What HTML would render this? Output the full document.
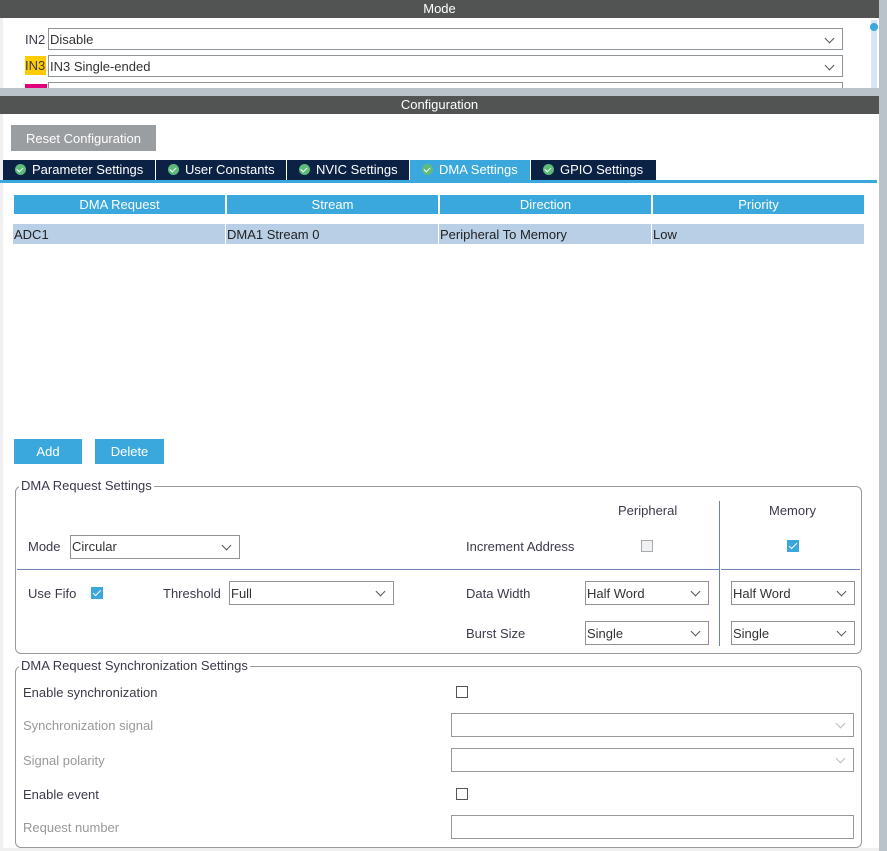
<!DOCTYPE html>
<html><head><meta charset="utf-8"><style>
*{margin:0;padding:0;box-sizing:border-box}
body{width:887px;height:851px;overflow:hidden;background:#fff;font-family:"Liberation Sans",Arial,sans-serif;font-size:13px;color:#3a3a4a;position:relative}
.a{position:absolute}
.hdr{background:#525453;color:#fff;text-align:center;font-size:13px;line-height:18px;left:0;width:879px;height:18px}
.sel{position:absolute;border:1px solid #8e9498;background:#fff;height:24px;line-height:22px;padding-left:1px;color:#333}
.sel:after{content:"";position:absolute;right:9px;top:6px;width:6px;height:6px;border-right:1px solid #555;border-bottom:1px solid #555;transform:rotate(45deg)}
.sel.dis:after{border-color:#bbb}
.tab{position:absolute;top:160px;height:20px;background:#0c2244;color:#fff;line-height:20px;padding-left:12px;font-size:13px}
.tab i{display:inline-block;width:11px;height:11px;border-radius:50%;background:#5dbb7a;vertical-align:-1px;margin-right:6px;position:relative}
.tab i:after{content:"";position:absolute;left:3px;top:2px;width:3px;height:5px;border-right:1.5px solid #fff;border-bottom:1.5px solid #fff;transform:rotate(45deg)}
.th{position:absolute;top:195px;height:19px;background:#3aa8dc;color:#fff;text-align:center;line-height:20px}
.btn{position:absolute;background:#3aa8dc;color:#fff;text-align:center;line-height:26px;height:25px}
.fs{position:absolute;border:1px solid #9a9a9a;border-radius:6px}
.lg{position:absolute;background:#fff;padding:0 2px;line-height:14px}
.cb{position:absolute;width:12px;height:12px;border:1px solid #555;background:#fff}
.cbc{position:absolute;width:12px;height:12px;background:#3aa8dc}
.cbc:after{content:"";position:absolute;left:4px;top:1px;width:3px;height:7px;border-right:1.5px solid #fff;border-bottom:1.5px solid #fff;transform:rotate(45deg)}
.gray{color:#999}
</style></head><body>
<div class="a" style="left:0;top:0;width:3px;height:851px;background:#f0f0f0"></div>
<div class="a" style="left:0;top:848px;width:887px;height:3px;background:#f0f0f0"></div>
<div class="a" style="left:879px;top:0;width:8px;height:851px;background:#b9c3c9"></div>
<div class="a hdr" style="top:0">Mode</div>
<div class="a" style="left:871px;top:20px;width:6px;height:68px;background:#d8e6f3"></div>
<div class="a" style="left:870px;top:23px;width:8px;height:8px;border-radius:50%;background:#3aa8dc"></div>
<div class="a" style="left:25px;top:32px">IN2</div>
<div class="sel" style="left:48px;top:28px;width:795px;height:22px;line-height:21px">Disable</div>
<div class="a" style="left:25px;top:56px;height:19px;width:21px;background:#ffcc00;line-height:20px">IN3</div>
<div class="sel" style="left:48px;top:55px;width:795px;height:22px;line-height:21px">IN3 Single-ended</div>
<div class="a" style="left:25px;top:84px;width:22px;height:4px;background:#e0007a"></div>
<div class="a" style="left:48px;top:82px;width:795px;height:6px;border:1px solid #8e9498;border-bottom:0"></div>
<div class="a" style="left:0;top:88px;width:879px;height:8px;background:#b9c3c9"></div>
<div class="a hdr" style="top:96px">Configuration</div>
<div class="a" style="left:11px;top:125px;width:145px;height:26px;background:#9a9ea1;color:#fff;text-align:center;line-height:27px">Reset Configuration</div>
<div class="tab" style="left:3px;width:152px"><i></i>Parameter Settings</div>
<div class="tab" style="left:156px;width:130px"><i></i>User Constants</div>
<div class="tab" style="left:287px;width:122px"><i></i>NVIC Settings</div>
<div class="tab" style="left:410px;width:120px;background:#3aa8dc"><i></i>DMA Settings</div>
<div class="tab" style="left:531px;width:125px"><i></i>GPIO Settings</div>
<div class="a" style="left:0;top:180px;width:877px;height:3px;background:#3aa8dc"></div>
<div class="th" style="left:14px;width:211px">DMA Request</div>
<div class="th" style="left:227px;width:211px">Stream</div>
<div class="th" style="left:440px;width:211px">Direction</div>
<div class="th" style="left:653px;width:211px">Priority</div>
<div class="a" style="left:13px;top:224px;width:851px;height:20px;background:#b8cfe6"></div>
<div class="a" style="left:225px;top:224px;width:1px;height:20px;background:#fff"></div>
<div class="a" style="left:438px;top:224px;width:1px;height:20px;background:#fff"></div>
<div class="a" style="left:651px;top:224px;width:1px;height:20px;background:#fff"></div>
<div class="a" style="left:14px;top:227px;color:#222">ADC1</div>
<div class="a" style="left:227px;top:227px;color:#222">DMA1 Stream 0</div>
<div class="a" style="left:440px;top:227px;color:#222">Peripheral To Memory</div>
<div class="a" style="left:653px;top:227px;color:#222">Low</div>
<div class="btn" style="left:14px;top:439px;width:68px">Add</div>
<div class="btn" style="left:95px;top:439px;width:69px">Delete</div>

<div class="fs" style="left:15px;top:486px;width:847px;height:168px"></div>
<div class="lg" style="left:19px;top:479px">DMA Request Settings</div>
<div class="a" style="left:618px;top:503px">Peripheral</div>
<div class="a" style="left:769px;top:503px">Memory</div>
<div class="a" style="left:719px;top:501px;width:1px;height:145px;background:#6d83b1"></div>
<div class="a" style="left:17px;top:569px;width:702px;height:1px;background:#6d83b1"></div>
<div class="a" style="left:721px;top:569px;width:139px;height:1px;background:#6d83b1"></div>
<div class="a" style="left:28px;top:539px">Mode</div>
<div class="sel" style="left:70px;top:535px;width:170px">Circular</div>
<div class="a" style="left:466px;top:539px">Increment Address</div>
<div class="cb" style="left:641px;top:540px;border-color:#aaa;background:#eef0f2"></div>
<div class="cbc" style="left:787px;top:540px"></div>
<div class="a" style="left:28px;top:586px">Use Fifo</div>
<div class="cbc" style="left:91px;top:587px"></div>
<div class="a" style="left:163px;top:586px">Threshold</div>
<div class="sel" style="left:229px;top:581px;width:165px;line-height:23px">Full</div>
<div class="a" style="left:466px;top:586px">Data Width</div>
<div class="sel" style="left:585px;top:581px;width:124px;line-height:23px">Half Word</div>
<div class="sel" style="left:731px;top:581px;width:124px;line-height:23px">Half Word</div>
<div class="a" style="left:466px;top:626px">Burst Size</div>
<div class="sel" style="left:585px;top:621px;width:124px;line-height:23px">Single</div>
<div class="sel" style="left:731px;top:621px;width:124px;line-height:23px">Single</div>

<div class="fs" style="left:15px;top:666px;width:847px;height:182px"></div>
<div class="lg" style="left:19px;top:659px">DMA Request Synchronization Settings</div>
<div class="a" style="left:23px;top:685px">Enable synchronization</div>
<div class="cb" style="left:456px;top:686px"></div>
<div class="a gray" style="left:23px;top:718px">Synchronization signal</div>
<div class="sel dis" style="left:451px;top:713px;width:403px;border-color:#999"></div>
<div class="a gray" style="left:23px;top:753px">Signal polarity</div>
<div class="sel dis" style="left:451px;top:748px;width:403px;border-color:#999"></div>
<div class="a" style="left:23px;top:787px">Enable event</div>
<div class="cb" style="left:456px;top:788px"></div>
<div class="a gray" style="left:23px;top:820px">Request number</div>
<div class="a" style="left:451px;top:815px;width:403px;height:24px;border:1px solid #999"></div>
</body></html>
